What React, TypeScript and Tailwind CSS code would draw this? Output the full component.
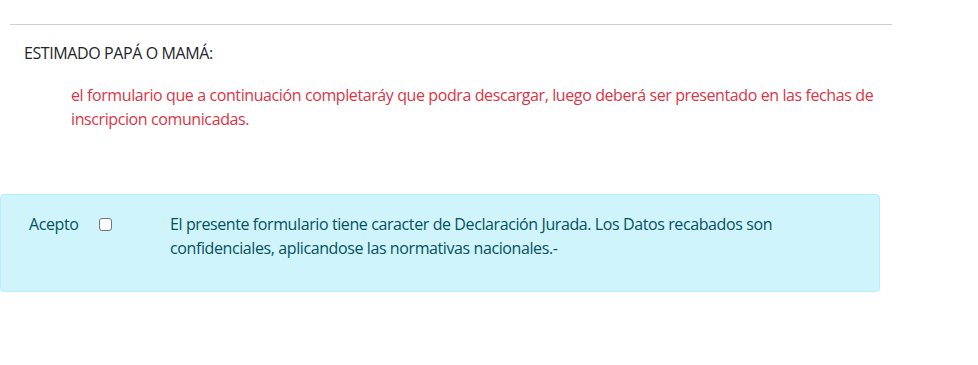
import React from 'react';

const App: React.FC = () => {
  return (
    <div className="w-[978px] h-[365px] bg-white overflow-hidden font-['Segoe_UI','Open_Sans',sans-serif] text-[#212529] tracking-[-0.4px]">
      <div className="pt-[24px] pl-[10px] pr-[86px]">
        <hr className="border-0 border-t border-[#cfcfcf]" />
      </div>

      <div className="pl-[24px] pt-[16px]">
        <p className="text-[16px] leading-[24px]">ESTIMADO PAPÁ O MAMÁ:</p>
        <p className="mt-[18px] pl-[47px] pr-[100px] text-[16px] leading-[24px] text-[#dc3545]">
          el formulario que a continuación completaráy que podra descargar, luego deberá ser presentado en las fechas de
          inscripcion comunicadas.
        </p>
      </div>

      <div className="mt-[63px] w-[880px] h-[98px] bg-[#cff4fc] border border-[#b6effb] rounded-[4px] text-[#055160] text-[16px] leading-[24px] flex items-start pt-[17px]">
        <span className="pl-[28px] w-[70px]">Acepto</span>
        <span className="ml-[28px] mt-[6px] w-[13px] h-[13px] rounded-[3px] border border-[#767676] bg-white" />
        <p className="ml-[58px] w-[620px]">
          El presente formulario tiene caracter de Declaración Jurada. Los Datos recabados son confidenciales, aplicandose las normativas nacionales.-
        </p>
      </div>
    </div>
  );
};

export default App;
